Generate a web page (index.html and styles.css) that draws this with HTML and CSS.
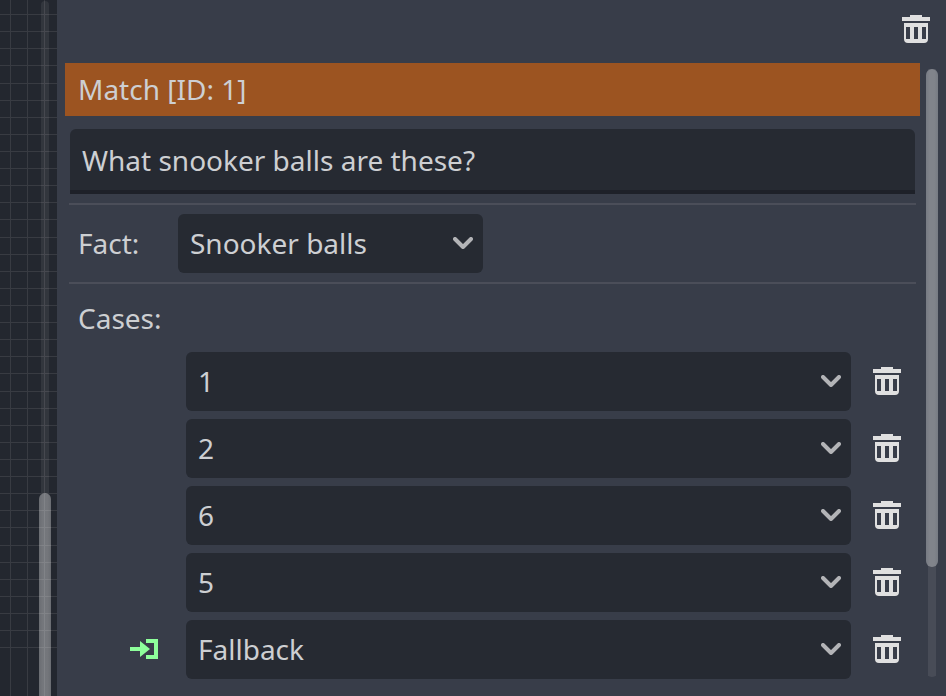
FILE: index.html
```
<!DOCTYPE html>
<html lang="en">
<head>
<meta charset="utf-8">
<title>Match node inspector</title>
<link rel="stylesheet" href="styles.css">
</head>
<body>
<svg class="defs" aria-hidden="true">
  <symbol id="trash" viewBox="0 0 28 28">
    <path d="M8 0h12v2h8v4H0V2h8z"/>
    <path fill-rule="evenodd" d="M2 8h24v16q0 4-4 4H6q-4 0-4-4zM4 12v12h4V12zM12 12v12h4V12zM20 12v12h4V12z"/>
  </symbol>
  <symbol id="chevron" viewBox="0 0 20 12">
    <path d="M2 2l8 8 8-8" fill="none" stroke="currentColor" stroke-width="4" stroke-linecap="round" stroke-linejoin="round"/>
  </symbol>
</svg>
<div class="editor">
  <aside class="graph">
    <svg class="grid" viewBox="0 0 57 696"><path d="M10.500 0v696m17-696v696m17-696v696M0 14.500h57m-57 17h57m-57 17h57m-57 17h57m-57 18h57m-57 17h57m-57 17h57m-57 17h57m-57 17h57m-57 17h57m-57 17h57m-57 17h57m-57 17h57m-57 18h57m-57 17h57m-57 17h57m-57 17h57m-57 17h57m-57 17h57m-57 17h57m-57 17h57m-57 17h57m-57 18h57m-57 17h57m-57 17h57m-57 17h57m-57 17h57m-57 17h57m-57 17h57m-57 17h57m-57 17h57m-57 18h57m-57 17h57m-57 17h57m-57 17h57m-57 17h57m-57 17h57m-57 17h57"/></svg>
    <div class="track"><div class="thumb"></div></div>
  </aside>
  <main class="inspector">
    <header class="toolbar"><svg class="trash"><use href="#trash"/></svg></header>
    <div class="body">
      <div class="content">
        <h1 class="title">Match [ID: 1]</h1>
        <div class="input">What snooker balls are these?</div>
        <div class="rule"></div>
        <div class="fact">
          <span class="label">Fact:</span>
          <div class="select"><span>Snooker balls</span><svg class="chevron"><use href="#chevron"/></svg></div>
        </div>
        <div class="rule"></div>
        <div class="cases-label">Cases:</div>
        <div class="cases">
          <div class="case"><div class="select"><span>1</span><svg class="chevron"><use href="#chevron"/></svg></div><svg class="trash"><use href="#trash"/></svg></div>
          <div class="case"><div class="select"><span>2</span><svg class="chevron"><use href="#chevron"/></svg></div><svg class="trash"><use href="#trash"/></svg></div>
          <div class="case"><div class="select"><span>6</span><svg class="chevron"><use href="#chevron"/></svg></div><svg class="trash"><use href="#trash"/></svg></div>
          <div class="case"><div class="select"><span>5</span><svg class="chevron"><use href="#chevron"/></svg></div><svg class="trash"><use href="#trash"/></svg></div>
          <div class="case">
            <svg class="enter" viewBox="0 0 28 20"><path d="M0 8h10V2l10 8-10 8v-6H0z"/><path d="M16 0h12v20H16v-4h8V4h-8z"/></svg>
            <div class="select"><span>Fallback</span><svg class="chevron"><use href="#chevron"/></svg></div><svg class="trash"><use href="#trash"/></svg>
          </div>
        </div>
      </div>
      <div class="scroll"><div class="scroll-thumb"></div></div>
    </div>
  </main>
</div>
</body>
</html>
```
FILE: styles.css
```
* { box-sizing: border-box; }
body {
  margin: 0;
  overflow: hidden;
  font: 28px/38px "Noto Sans", sans-serif;
  color: #cdcfd2;
  background: #383d49;
}
.defs { position: absolute; width: 0; height: 0; }
.editor { display: flex; width: 946px; height: 696px; }
.graph {
  position: relative;
  width: 57px;
  padding-left: 39px;
  background: #23272f;
}
.grid { position: absolute; top: 0; left: 0; width: 57px; height: 696px; fill: none; stroke: #383b42; }
.track {
  position: relative;
  width: 12px;
  height: 100%;
  padding-top: 493px;
}
.track::before {
  content: "";
  position: absolute;
  top: 1px;
  left: 2px;
  width: 8px;
  height: 492px;
  border-radius: 4px 4px 0 0;
  background: rgba(255, 255, 255, .07);
}
.thumb {
  height: 203px;
  border-radius: 6px 6px 0 0;
  background: linear-gradient(to right, rgba(255, 255, 255, .32), rgba(255, 255, 255, .37) 30% 70%, rgba(255, 255, 255, .32));
}
.inspector { flex: 1; display: flex; flex-direction: column; }
.toolbar { height: 63px; padding: 15px 16px 0 0; display: flex; justify-content: flex-end; }
.trash { width: 28px; height: 28px; fill: #e0e0e0; flex: none; }
.body { flex: 1; display: flex; }
.content { width: 855px; margin-left: 8px; }
.title {
  margin: 0 0 13px;
  height: 53px;
  padding: 7px 13px;
  font: inherit;
  background: #9c5421;
}
.input {
  height: 65px;
  margin: 0 5px 9px;
  padding: 12px;
  background: #262a32;
  border-bottom: 4px solid #1e2129;
  border-radius: 6px 6px 0 0;
}
.rule { height: 2px; margin: 0 4px; background: #4b4e59; }
.fact { display: flex; align-items: center; padding: 9px 0 9px 13px; }
.label { width: 100px; padding-bottom: 2px; }
.select {
  width: 305px;
  height: 59px;
  padding: 0 10px 2px 12px;
  display: flex;
  align-items: center;
  justify-content: space-between;
  background: #262a32;
  border-radius: 6px;
}
.chevron { width: 20px; height: 12px; color: #b3b4b7; }
.cases-label { padding: 15px 13px; }
.cases { display: flex; flex-direction: column; gap: 8px; }
.case { display: flex; align-items: center; justify-content: flex-end; padding-right: 19px; }
.case .select { width: 665px; margin-right: 22px; }
.case .trash { margin-bottom: 2px; }
.enter { width: 28px; height: 20px; margin: 0 28px 2px 0; fill: #8eff9b; }
.scroll {
  width: 12px;
  height: 608px;
  margin: 6px 0 0 6px;
  background: linear-gradient(#484c57, #484c57) 2px 0 / 8px 100% no-repeat;
  border-radius: 0 0 6px 6px;
}
.scroll-thumb { height: 498px; border-radius: 6px; background: linear-gradient(to right, #777b83, #81848b 30% 70%, #777b83); }
```
